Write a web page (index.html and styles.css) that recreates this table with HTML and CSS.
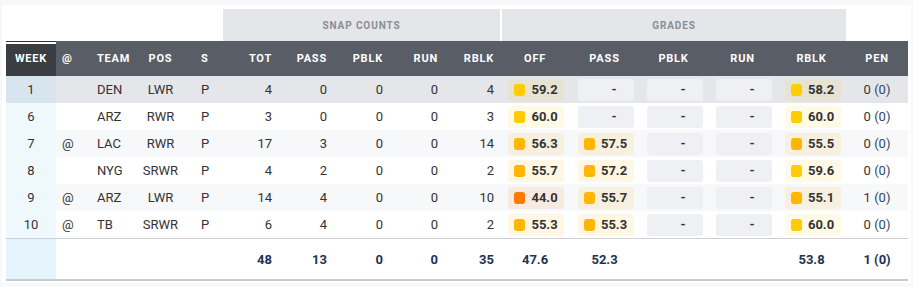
FILE: index.html
```html
<!DOCTYPE html>
<html>
<head>
<meta charset="utf-8">
<link rel="stylesheet" href="styles.css">
</head>
<body>
<div class="panel">
<table class="stats">
  <colgroup>
    <col class="c-week"><col class="c-at"><col class="c-team"><col class="c-pos"><col class="c-s">
    <col class="c-snap"><col class="c-snap"><col class="c-snap2"><col class="c-snap"><col class="c-snap2">
    <col class="c-gr1"><col class="c-gr"><col class="c-gr"><col class="c-gr"><col class="c-gr">
    <col class="c-pen">
  </colgroup>
  <thead>
    <tr class="groups">
      <th colspan="5" class="blank"></th>
      <th colspan="5" class="group">SNAP COUNTS</th>
      <th colspan="5" class="group group-grades">GRADES</th>
      <th class="blank"></th>
    </tr>
    <tr class="heads">
      <th class="week">WEEK</th>
      <th class="left">@</th>
      <th class="left team">TEAM</th>
      <th class="center">POS</th>
      <th class="left s">S</th>
      <th class="num">TOT</th>
      <th class="num">PASS</th>
      <th class="num">PBLK</th>
      <th class="num">RUN</th>
      <th class="num">RBLK</th>
      <th class="center">OFF</th>
      <th class="center">PASS</th>
      <th class="center">PBLK</th>
      <th class="center">RUN</th>
      <th class="center">RBLK</th>
      <th class="center">PEN</th>
    </tr>
  </thead>
  <tbody>
    <tr class="hl">
      <td class="week">1</td><td class="left"></td><td class="left team">DEN</td><td class="center">LWR</td><td class="left s">P</td>
      <td class="num">4</td><td class="num">0</td><td class="num">0</td><td class="num">0</td><td class="num">4</td>
      <td><div class="grade g-yellow"><i></i>59.2</div></td>
      <td><div class="grade none"><i></i>-</div></td>
      <td><div class="grade none"><i></i>-</div></td>
      <td><div class="grade none"><i></i>-</div></td>
      <td><div class="grade g-yellow"><i></i>58.2</div></td>
      <td class="center pen">0 <span>(0)</span></td>
    </tr>
    <tr>
      <td class="week">6</td><td class="left"></td><td class="left team">ARZ</td><td class="center">RWR</td><td class="left s">P</td>
      <td class="num">3</td><td class="num">0</td><td class="num">0</td><td class="num">0</td><td class="num">3</td>
      <td><div class="grade g-yellow"><i></i>60.0</div></td>
      <td><div class="grade none"><i></i>-</div></td>
      <td><div class="grade none"><i></i>-</div></td>
      <td><div class="grade none"><i></i>-</div></td>
      <td><div class="grade g-yellow"><i></i>60.0</div></td>
      <td class="center pen">0 <span>(0)</span></td>
    </tr>
    <tr class="alt">
      <td class="week">7</td><td class="left">@</td><td class="left team">LAC</td><td class="center">RWR</td><td class="left s">P</td>
      <td class="num">17</td><td class="num">3</td><td class="num">0</td><td class="num">0</td><td class="num">14</td>
      <td><div class="grade g-amber"><i></i>56.3</div></td>
      <td><div class="grade g-amber"><i></i>57.5</div></td>
      <td><div class="grade none"><i></i>-</div></td>
      <td><div class="grade none"><i></i>-</div></td>
      <td><div class="grade g-amber"><i></i>55.5</div></td>
      <td class="center pen">0 <span>(0)</span></td>
    </tr>
    <tr>
      <td class="week">8</td><td class="left"></td><td class="left team">NYG</td><td class="center">SRWR</td><td class="left s">P</td>
      <td class="num">4</td><td class="num">2</td><td class="num">0</td><td class="num">0</td><td class="num">2</td>
      <td><div class="grade g-amber"><i></i>55.7</div></td>
      <td><div class="grade g-amber"><i></i>57.2</div></td>
      <td><div class="grade none"><i></i>-</div></td>
      <td><div class="grade none"><i></i>-</div></td>
      <td><div class="grade g-yellow"><i></i>59.6</div></td>
      <td class="center pen">0 <span>(0)</span></td>
    </tr>
    <tr class="alt">
      <td class="week">9</td><td class="left">@</td><td class="left team">ARZ</td><td class="center">LWR</td><td class="left s">P</td>
      <td class="num">14</td><td class="num">4</td><td class="num">0</td><td class="num">0</td><td class="num">10</td>
      <td><div class="grade g-orange"><i></i>44.0</div></td>
      <td><div class="grade g-amber"><i></i>55.7</div></td>
      <td><div class="grade none"><i></i>-</div></td>
      <td><div class="grade none"><i></i>-</div></td>
      <td><div class="grade g-amber"><i></i>55.1</div></td>
      <td class="center pen"><b class="pos">1</b> <span>(0)</span></td>
    </tr>
    <tr>
      <td class="week">10</td><td class="left">@</td><td class="left team">TB</td><td class="center">SRWR</td><td class="left s">P</td>
      <td class="num">6</td><td class="num">4</td><td class="num">0</td><td class="num">0</td><td class="num">2</td>
      <td><div class="grade g-amber"><i></i>55.3</div></td>
      <td><div class="grade g-amber"><i></i>55.3</div></td>
      <td><div class="grade none"><i></i>-</div></td>
      <td><div class="grade none"><i></i>-</div></td>
      <td><div class="grade g-yellow"><i></i>60.0</div></td>
      <td class="center pen">0 <span>(0)</span></td>
    </tr>
  </tbody>
  <tfoot>
    <tr>
      <td class="week"></td><td></td><td></td><td></td><td></td>
      <td class="num">48</td><td class="num">13</td><td class="num">0</td><td class="num">0</td><td class="num">35</td>
      <td class="center">47.6</td><td class="center">52.3</td><td></td><td></td><td class="center">53.8</td>
      <td class="center">1 (0)</td>
    </tr>
  </tfoot>
</table>
</div>
</body>
</html>
```

FILE: styles.css
```css
html, body {
  margin: 0;
  padding: 0;
  background: #f7f8fa;
  font-family: Roboto, "Liberation Sans", Arial, sans-serif;
}

.panel {
  margin: 5px 2px 0 2px;
  background: #ffffff;
  padding: 4px 3px 2px 4px;
}

.stats {
  width: 902px;
  table-layout: fixed;
  border-collapse: separate;
  border-spacing: 0;
  font-size: 13px;
  color: #333333;
}

.c-week { width: 50px; }
.c-at { width: 32px; }
.c-team { width: 50px; }
.c-pos { width: 45px; }
.c-s { width: 40px; }
.c-snap { width: 55px; }
.c-snap2 { width: 56px; }
.c-gr1 { width: 70px; }
.c-gr { width: 69px; }
.c-pen { width: 62px; }

th, td {
  padding: 0;
  white-space: nowrap;
}

.groups th {
  height: 32px;
  font-size: 10px;
  font-weight: 700;
  letter-spacing: 0.9px;
  color: #8b8e94;
  text-align: center;
}
.groups .group { background: #e4e6ea; }
.groups .group-grades { border-left: 2px solid #ffffff; }
.groups .blank { background: #ffffff; }

.heads th {
  height: 35px;
  background: #595d65;
  color: #ffffff;
  font-size: 11px;
  font-weight: 700;
  letter-spacing: 0.8px;
}
.heads th.week {
  background: linear-gradient(#2f3135 0 1px, #ffffff 1px 3px, #3a3d42 3px);
}

.left { text-align: left; padding-left: 6px; }
.left.team { padding-left: 9px; }
.left.s { padding-left: 18px; }
.center { text-align: center; }
.num { text-align: right; padding-right: 6px; }
.week { text-align: center; }

tbody td {
  height: 27px;
}
tbody tr { background: #ffffff; }
tbody tr.alt { background: #f7f8fa; }
tbody tr.hl { background: #e4e6ea; }

tbody td.week { background: #eff8fd; }
tbody tr.hl td.week { background: #d8e5ee; }

.grade {
  width: 56px;
  height: 22px;
  margin: 0 auto;
  border-radius: 3px;
  display: flex;
  align-items: center;
  justify-content: center;
  gap: 6px;
  font-weight: 700;
  color: #333333;
  position: relative;
  left: 1px;
}
.grade i {
  display: block;
  width: 11px;
  height: 12px;
  border-radius: 3px;
}
.grade.none { background: #eef0f4; }
.grade.none i { background: transparent; }
.g-yellow { background: rgba(255, 204, 0, 0.1); }
.g-yellow i { background: #ffcc00; }
.g-amber { background: rgba(255, 180, 0, 0.11); }
.g-amber i { background: #ffb600; }
.g-orange { background: rgba(255, 120, 0, 0.1); }
.g-orange i { background: #ff7a00; }

.pen span { color: #34475f; }
.pen .pos { font-weight: 400; color: #5c1f45; }

tfoot td {
  height: 40px;
  border-top: 1px solid #cdd1d7;
  border-bottom: 2px solid #c8cbd0;
  font-weight: 700;
  color: #1e3352;
}
tfoot td.week { background: #e5f3fc; }
```
